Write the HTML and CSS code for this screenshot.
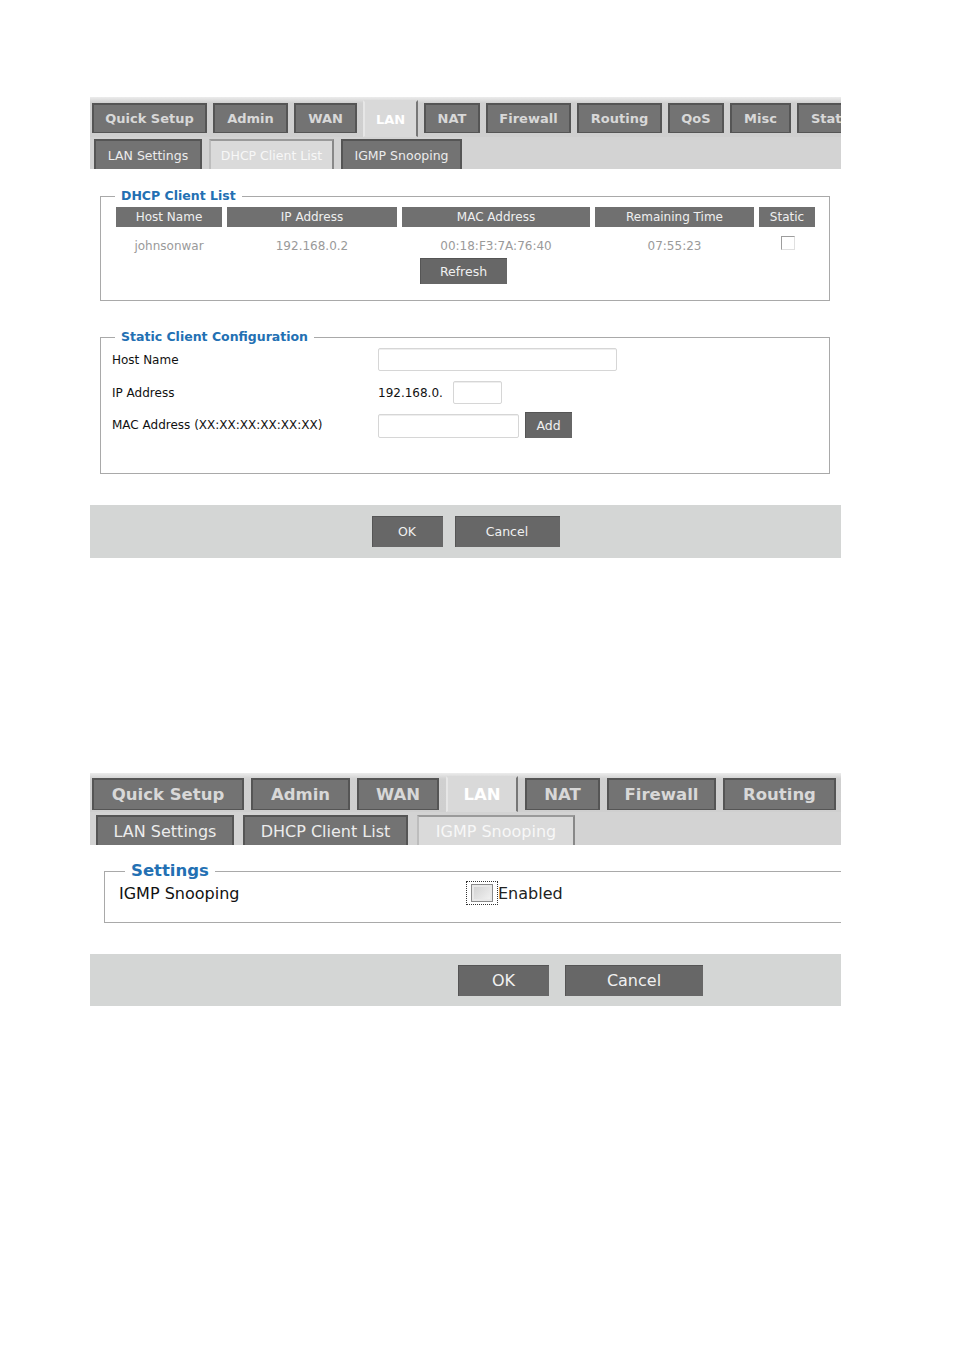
FILE: index.html
```html
<!DOCTYPE html>
<html>
<head>
<meta charset="utf-8">
<title>LAN - DHCP Client List / IGMP Snooping</title>
<link rel="stylesheet" href="styles.css">
</head>
<body>
<div class="page">

  <section class="panel p1">
    <div class="tabs-main">
      <div class="tab t-qs">Quick Setup</div>
      <div class="tab t-admin">Admin</div>
      <div class="tab t-wan">WAN</div>
      <div class="tab active t-lan">LAN</div>
      <div class="tab t-nat">NAT</div>
      <div class="tab t-fw">Firewall</div>
      <div class="tab t-rt">Routing</div>
      <div class="tab t-qos">QoS</div>
      <div class="tab t-misc">Misc</div>
      <div class="tab t-stat">Stat</div>
    </div>
    <div class="tabs-sub">
      <div class="subtab s-lan">LAN Settings</div>
      <div class="subtab active s-dhcp">DHCP Client List</div>
      <div class="subtab s-igmp">IGMP Snooping</div>
    </div>
    <div class="content">
      <fieldset class="fs fs-list">
        <legend>DHCP Client List</legend>
        <div class="grid-table">
          <div class="th">Host Name</div>
          <div class="th">IP Address</div>
          <div class="th">MAC Address</div>
          <div class="th">Remaining Time</div>
          <div class="th">Static</div>
          <div class="td">johnsonwar</div>
          <div class="td">192.168.0.2</div>
          <div class="td">00:18:F3:7A:76:40</div>
          <div class="td">07:55:23</div>
          <div class="td"><span class="cb-small"></span></div>
        </div>
        <div class="center-row"><button class="btn btn-refresh">Refresh</button></div>
      </fieldset>

      <fieldset class="fs fs-static">
        <legend>Static Client Configuration</legend>
        <div class="frow r1">
          <span class="flabel">Host Name</span>
          <span class="input in-host"></span>
        </div>
        <div class="frow r2">
          <span class="flabel">IP Address</span>
          <span class="ip-prefix">192.168.0.</span>
          <span class="input in-ip"></span>
        </div>
        <div class="frow r3">
          <span class="flabel">MAC Address (XX:XX:XX:XX:XX:XX)</span>
          <span class="input in-mac"></span>
          <button class="btn btn-add">Add</button>
        </div>
      </fieldset>
    </div>
    <div class="actions">
      <button class="btn btn-ok">OK</button>
      <button class="btn btn-cancel">Cancel</button>
    </div>
  </section>

  <section class="panel p2">
    <div class="tabs-main">
      <div class="tab t-qs">Quick Setup</div>
      <div class="tab t-admin">Admin</div>
      <div class="tab t-wan">WAN</div>
      <div class="tab active t-lan">LAN</div>
      <div class="tab t-nat">NAT</div>
      <div class="tab t-fw">Firewall</div>
      <div class="tab t-rt">Routing</div>
      <div class="tab t-next"></div>
    </div>
    <div class="tabs-sub">
      <div class="subtab s-lan">LAN Settings</div>
      <div class="subtab s-dhcp">DHCP Client List</div>
      <div class="subtab active s-igmp">IGMP Snooping</div>
    </div>
    <div class="content">
      <fieldset class="fs fs-igmp">
        <legend>Settings</legend>
        <div class="frow">
          <span class="flabel">IGMP Snooping</span>
          <span class="focus-box"><span class="cb-big"></span></span>
          <span class="cb-text">Enabled</span>
        </div>
      </fieldset>
    </div>
    <div class="actions">
      <button class="btn btn-ok">OK</button>
      <button class="btn btn-cancel">Cancel</button>
    </div>
  </section>

</div>
</body>
</html>
```

FILE: styles.css
```css
* { box-sizing: border-box; }

html, body {
  margin: 0;
  padding: 0;
  background: #ffffff;
}

body {
  font-family: "DejaVu Sans", Verdana, sans-serif;
  color: #111;
}

.page {
  padding: 97px 0 0 90px;
}

.panel {
  width: 751px;
  overflow: hidden;
  background: #fff;
}

/* ---------- main tabs ---------- */
.tabs-main {
  display: flex;
  align-items: flex-start;
  background: linear-gradient(#ececec 0, #d0d0d0 6px, #cfcfcf 100%);
  white-space: nowrap;
}

.tab {
  flex: none;
  display: flex;
  align-items: center;
  justify-content: center;
  background: #737373;
  border: 2px solid #555;
  border-bottom-width: 1px;
  color: #d8d8d8;
  font-weight: bold;
}

.tab.active {
  background: #d9d9d9;
  border-color: #d9d9d9 #777 #d9d9d9 #e6e6e6;
  color: #ffffff;
}

/* ---------- sub tabs ---------- */
.tabs-sub {
  display: flex;
  align-items: flex-start;
  background: #d3d3d3;
  white-space: nowrap;
}

.subtab {
  flex: none;
  display: flex;
  align-items: center;
  justify-content: center;
  background: #737373;
  border: 2px solid #555;
  border-bottom: 0;
  color: #ececec;
}

.subtab.active {
  background: #dadada;
  border-color: #9a9a9a #888 #dadada #bdbdbd;
  color: #f7f7f7;
}

/* ---------- fieldsets ---------- */
.fs {
  margin: 0;
  border: 1px solid #a9a9a9;
  min-width: 0;
}

.fs legend {
  color: #2370b3;
  font-weight: bold;
  padding: 0 6px;
}

.frow {
  display: flex;
  align-items: center;
}

.flabel {
  flex: none;
}

.input {
  display: block;
  flex: none;
  background: #fff;
  border: 1px solid #d6d6d6;
  border-radius: 2px;
  box-shadow: inset 0 1px 0 #eee;
}

.btn {
  display: flex;
  align-items: center;
  justify-content: center;
  flex: none;
  margin: 0;
  padding: 0;
  border: 0;
  background: #676767;
  color: #f0f0f0;
  font-family: "DejaVu Sans", Verdana, sans-serif;
  box-shadow: inset 1px 1px 0 #555;
}

.actions {
  display: flex;
  align-items: flex-start;
  background: #d4d6d5;
}

/* =================== PANEL 1 =================== */
.p1 .tabs-main {
  height: 40px;
  padding: 6px 0 0 2px;
  gap: 6px;
}

.p1 .tab {
  height: 30px;
  font-size: 13px;
}

.p1 .tab.active {
  height: 37px;
  margin-top: -3px;
}

.p1 .t-qs { width: 115px; }
.p1 .t-admin { width: 75px; }
.p1 .t-wan { width: 63px; }
.p1 .t-lan { width: 55px; }
.p1 .t-nat { width: 56px; }
.p1 .t-fw { width: 85px; }
.p1 .t-rt { width: 85px; }
.p1 .t-qos { width: 56px; }
.p1 .t-misc { width: 61px; }
.p1 .t-stat { width: 44px; justify-content: flex-start; padding-left: 12px; border-right: 0; overflow: hidden; }

.p1 .tabs-sub {
  height: 32px;
  padding: 2px 0 0 4px;
  gap: 7px;
}

.p1 .subtab {
  height: 30px;
  font-size: 12.5px;
}

.p1 .s-lan { width: 108px; }
.p1 .s-dhcp { width: 125px; }
.p1 .s-igmp { width: 121px; }

.p1 .content {
  padding: 20px 0 31px 10px;
}

.p1 .fs {
  width: 730px;
  padding: 4px 14px 16px 15px;
}

.p1 .fs legend {
  font-size: 12.5px;
  line-height: 14px;
}

.fs-list legend { margin-left: -1px; }

.grid-table {
  display: grid;
  grid-template-columns: 106px 170px 188px 159px 56px;
  column-gap: 5px;
  width: 699px;
  font-size: 12px;
}

.th {
  height: 20px;
  display: flex;
  align-items: center;
  justify-content: center;
  background: #707070;
  color: #efefef;
}

.td {
  height: 20px;
  margin-top: 9px;
  display: flex;
  align-items: center;
  justify-content: center;
  color: #9a9a9a;
}

.cb-small {
  display: block;
  width: 14px;
  height: 14px;
  margin-top: -6px;
  margin-left: 2px;
  border: 1px solid #9d9d9d;
  border-right-color: #e0e0e0;
  border-bottom-color: #e0e0e0;
  background: #fff;
}

.center-row {
  display: flex;
  justify-content: center;
  width: 699px;
  padding-top: 2px;
  padding-right: 4px;
}

.btn-refresh {
  width: 87px;
  height: 26px;
  font-size: 12.5px;
}

.fs-static {
  margin-top: 29px !important;
  padding: 4px 14px 35px 11px !important;
}

.fs-static legend { margin-left: 3px; }

.fs-static .frow {
  font-size: 12px;
}

.fs-static .flabel {
  width: 266px;
}

.r1 { height: 23px; }
.r2 { height: 23px; margin-top: 10px; }
.r3 { height: 26px; margin-top: 8px; }

.in-host { width: 239px; height: 23px; }
.ip-prefix { width: 75px; flex: none; }
.in-ip { width: 49px; height: 23px; }
.in-mac { width: 141px; height: 24px; margin-top: 2px; }

.btn-add {
  width: 47px;
  height: 26px;
  margin-left: 6px;
  font-size: 12.5px;
}

.p1 .actions {
  height: 53px;
  padding-top: 11px;
  justify-content: center;
  gap: 12px;
}

.p1 .btn-ok { width: 71px; height: 31px; font-size: 12.5px; }
.p1 .btn-cancel { width: 105px; height: 31px; font-size: 12.5px; }

/* =================== PANEL 2 =================== */
.p2 {
  margin-top: 215px;
}

.p2 .tabs-main {
  height: 39px;
  padding: 5px 0 0 2px;
  gap: 7px;
}

.p2 .tab {
  height: 32px;
  font-size: 16.5px;
}

.p2 .tab.active {
  height: 36px;
  margin-top: -2px;
}

.p2 .t-qs { width: 152px; }
.p2 .t-admin { width: 99px; }
.p2 .t-wan { width: 82px; }
.p2 .t-lan { width: 72px; }
.p2 .t-nat { width: 75px; }
.p2 .t-fw { width: 109px; }
.p2 .t-rt { width: 113px; }
.p2 .t-next { width: 40px; }

.p2 .tabs-sub {
  height: 33px;
  padding: 3px 0 0 6px;
  gap: 9px;
}

.p2 .subtab {
  height: 30px;
  font-size: 16px;
}

.p2 .s-lan { width: 138px; }
.p2 .s-dhcp { width: 165px; }
.p2 .s-igmp { width: 158px; }

.p2 .content {
  padding: 17px 0 31px 14px;
}

.fs-igmp {
  width: 780px;
  padding: 1px 14px 17px 14px;
}

.fs-igmp legend {
  font-size: 16.5px;
  line-height: 18px;
  margin-left: 6px;
}

.fs-igmp .frow {
  height: 24px;
  font-size: 16px;
}

.fs-igmp .flabel {
  width: 347px;
}

.focus-box {
  flex: none;
  width: 32px;
  height: 24px;
  border: 1px dotted #333;
  display: flex;
  align-items: center;
  justify-content: center;
}

.cb-big {
  display: block;
  width: 22px;
  height: 18px;
  border: 1px solid #8a8a8a;
  background: linear-gradient(135deg, #cfcfcf, #f4f4f4);
  box-shadow: inset 0 0 0 2px #e9e9e9;
}

.cb-text {
  color: #222;
}

.p2 .actions {
  height: 52px;
  padding: 11px 0 0 368px;
  gap: 16px;
}

.p2 .btn-ok { width: 91px; height: 31px; font-size: 16px; }
.p2 .btn-cancel { width: 138px; height: 31px; font-size: 16px; }
```
